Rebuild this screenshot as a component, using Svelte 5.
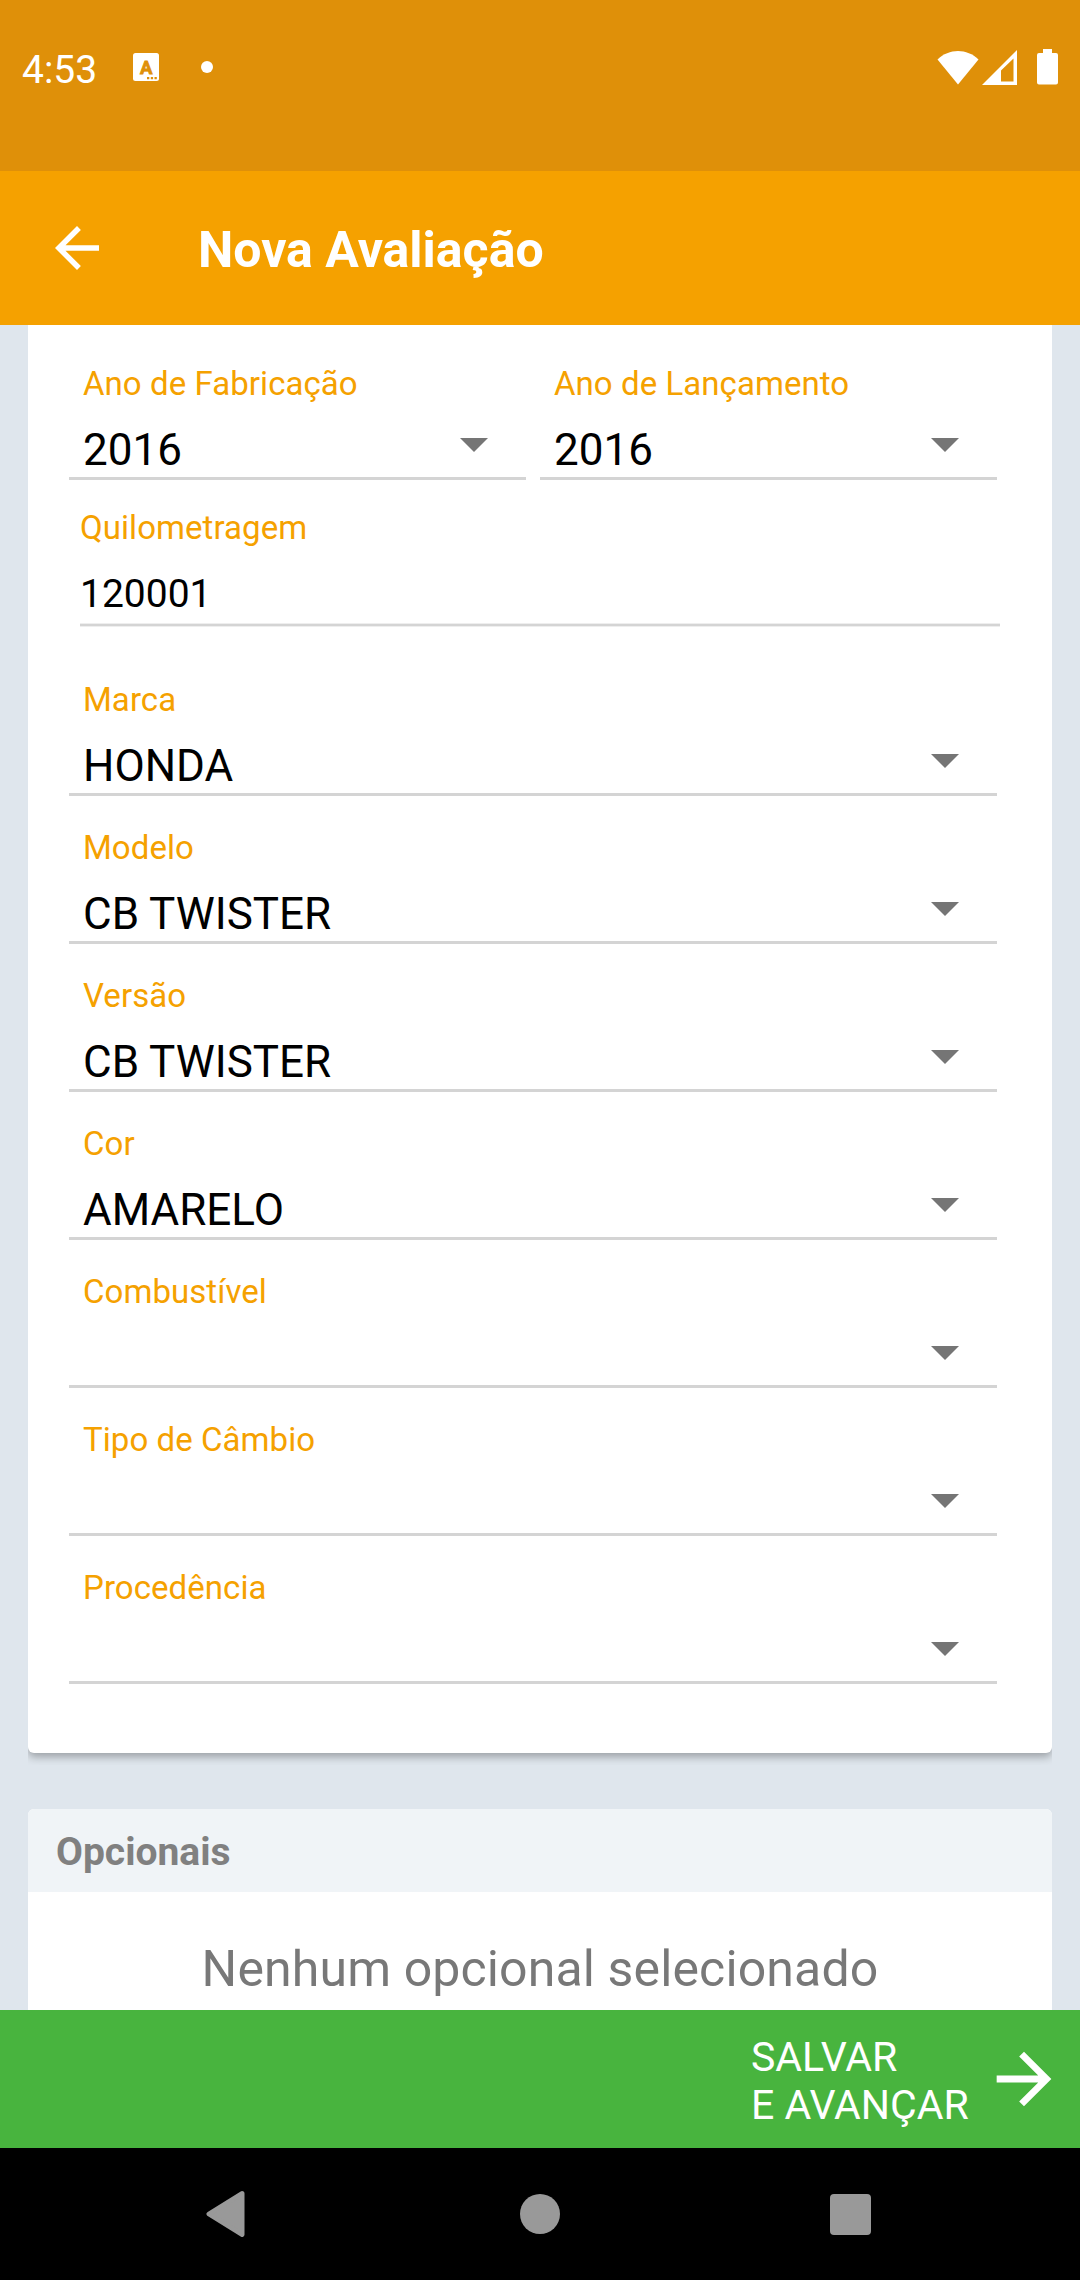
<script>
  const years = [
    { label: 'Ano de Fabricação', value: '2016' },
    { label: 'Ano de Lançamento', value: '2016' },
  ];
  const mileage = { label: 'Quilometragem', value: '120001' };
  const selects = [
    { label: 'Marca', value: 'HONDA' },
    { label: 'Modelo', value: 'CB TWISTER' },
    { label: 'Versão', value: 'CB TWISTER' },
    { label: 'Cor', value: 'AMARELO' },
    { label: 'Combustível', value: '' },
    { label: 'Tipo de Câmbio', value: '' },
    { label: 'Procedência', value: '' },
  ];
</script>

{#snippet select(field)}
  <div class="field">
    <div class="label">{field.label}</div>
    <div class="control">
      <span class="value">{field.value}</span>
      <svg class="caret" width="28" height="14" viewBox="0 0 28 14"><path d="M0 0H28L14 14Z" fill="#757575" /></svg>
    </div>
  </div>
{/snippet}

<div class="screen">
  <header class="status">
    <span class="clock">4:53</span>
    <svg class="badge" width="26" height="28" viewBox="0 0 26 28">
      <rect width="26" height="28" rx="2.5" fill="#fff" />
      <text x="13.2" y="20.6" text-anchor="middle">A</text>
      <path d="M14 24h2.3v2.2H14zM17.8 24h2.3v2.2h-2.3zM21.5 24h2.3v2.2h-2.3z" fill="#df9009" />
    </svg>
    <i class="dot"></i>
    <div class="system">
      <svg width="42" height="35" viewBox="0 0 42 35"><path d="M0.5 9.5C12-2 30-2 41.500 9.500L21 34.500Z" fill="#fff" /></svg>
      <svg class="signal" width="35" height="35" viewBox="0 0 35 35">
        <path fill-rule="evenodd" d="M0 35L35 0V35ZM19 31.600H31.500V8.500L19 20.500Z" fill="#fff" />
      </svg>
      <svg class="battery" width="21" height="36" viewBox="0 0 21 36"><path d="M6 0H15V4H19Q21 4 21 6V33.500Q21 35.500 19 35.500H2Q0 35.500 0 33.500V6Q0 4 2 4H6Z" fill="#fff" /></svg>
    </div>
  </header>

  <div class="appbar">
    <svg width="66" height="66" viewBox="0 0 24 24"><path d="M20 11H7.830l5.590-5.590L12 4l-8 8 8 8 1.410-1.410L7.830 13H20v-2z" fill="#fff" /></svg>
    <h1>Nova Avaliação</h1>
  </div>

  <main>
    <section class="card form">
      <div class="pair">
        {#each years as field}
          {@render select(field)}
        {/each}
      </div>
      <div class="input">
        <div class="label">{mileage.label}</div>
        <div class="number">{mileage.value}</div>
      </div>
      {#each selects as field}
        {@render select(field)}
      {/each}
    </section>

    <section class="card optional">
      <h2>Opcionais</h2>
      <p>Nenhum opcional selecionado</p>
    </section>
  </main>

  <div class="action">
    <span>SALVAR<br />E AVANÇAR</span>
    <svg width="82" height="82" viewBox="0 0 24 24"><path d="M12 4l-1.410 1.410L16.170 11H4v2h12.170l-5.580 5.590L12 20l8-8z" fill="#fff" /></svg>
  </div>

  <nav>
    <svg width="40" height="46" viewBox="0 0 40 46"><path d="M36 2.500L3 23L36 43.500Z" fill="#999" stroke="#999" stroke-width="5" stroke-linejoin="round" /></svg>
    <svg width="40" height="40" viewBox="0 0 40 40"><circle cx="20" cy="20" r="20" fill="#999" /></svg>
    <svg width="41" height="41" viewBox="0 0 41 41"><rect width="41" height="41" rx="4" fill="#999" /></svg>
  </nav>
</div>

<style>
  :global(body) { margin: 0; }
  .screen {
    width: 1080px;
    height: 2280px;
    display: flex;
    flex-direction: column;
    overflow: hidden;
    background: #dfe6ed;
    font-family: Roboto, sans-serif;
  }
  svg { display: block; flex: none; }
  .status {
    height: 171px;
    box-sizing: border-box;
    padding: 44px 22px 0;
    display: flex;
    align-items: flex-start;
    background: #df9009;
    color: #fff;
  }
  .clock { width: 111px; font-size: 39px; line-height: 52px; }
  .badge { margin-top: 9px; }
  .badge text { font: 700 18.500px Roboto, sans-serif; fill: #df9009; stroke: #df9009; stroke-width: 0.800px; }
  .dot { width: 12px; height: 12px; margin: 17px 0 0 42px; border-radius: 50%; background: #fff; }
  .system { margin-left: auto; display: flex; margin-top: 6px; }
  .signal { margin-left: 3px; }
  .battery { margin-left: 20px; margin-top: -1px; }
  .appbar {
    height: 154px;
    flex: none;
    box-sizing: border-box;
    padding-left: 44px;
    display: flex;
    align-items: center;
    background: #f5a100;
    color: #fff;
  }
  h1 { margin: 4px 0 0 88px; font-size: 50px; line-height: 60px; font-weight: 700; }
  main { height: 1685px; flex: none; overflow: hidden; padding: 0 28px; }
  .card { background: #fff; overflow: hidden; }
  .form {
    height: 1428px;
    box-sizing: border-box;
    padding: 7px 55px 0 41px;
    border-radius: 0 0 6px 6px;
    box-shadow: 0 4px 8px rgba(0, 0, 0, 0.3);
    clip-path: inset(0 0 -12px 0);
  }
  .pair { display: grid; grid-template-columns: 1fr 1fr; gap: 14px; }
  .field {
    height: 148px;
    box-sizing: border-box;
    padding: 32px 0 0 14px;
    border-bottom: 3px solid #d4d4d4;
  }
  .label { color: #f5a100; font-size: 33px; line-height: 40px; letter-spacing: 0.06px; white-space: nowrap; }
  .control { height: 52px; margin-top: 20px; display: flex; justify-content: space-between; }
  .value { font-size: 44px; line-height: 52px; color: #000; }
  .caret { margin: 14px 38px 0 0; }
  .input { height: 168px; box-sizing: border-box; padding-top: 28px; margin: 0 -3px 0 11px; }
  .number {
    height: 78px;
    box-sizing: border-box;
    padding-top: 23px;
    font-size: 39px;
    line-height: 46px;
    border-bottom: 2px solid #d4d4d4;
    box-shadow: 0 1px #eee, inset 0 -1px #eee;
  }
  .optional { margin-top: 56px; height: 240px; border-radius: 6px 6px 0 0; }
  h2 {
    margin: 0;
    height: 83px;
    padding-left: 28px;
    background: #f0f4f7;
    color: #808080;
    font-size: 39px;
    line-height: 87px;
    font-weight: 700;
  }
  p { margin: 47px 0 0; text-align: center; color: #787878; font-size: 50px; line-height: 60px; letter-spacing: 0.130px; }
  .action {
    height: 138px;
    flex: none;
    box-sizing: border-box;
    padding-right: 15px;
    display: flex;
    align-items: center;
    justify-content: flex-end;
    background: #48b43e;
    color: #fff;
  }
  .action span { width: 232px; padding-top: 3px; font-size: 41px; line-height: 48px; white-space: nowrap; }
  nav {
    height: 132px;
    flex: none;
    box-sizing: border-box;
    padding: 0 209px 0 206px;
    display: grid;
    grid-template-columns: 40px 1fr 41px;
    align-items: center;
    justify-items: center;
    background: #000;
  }
  nav svg:nth-child(2) { margin-left: 4px; }
</style>
